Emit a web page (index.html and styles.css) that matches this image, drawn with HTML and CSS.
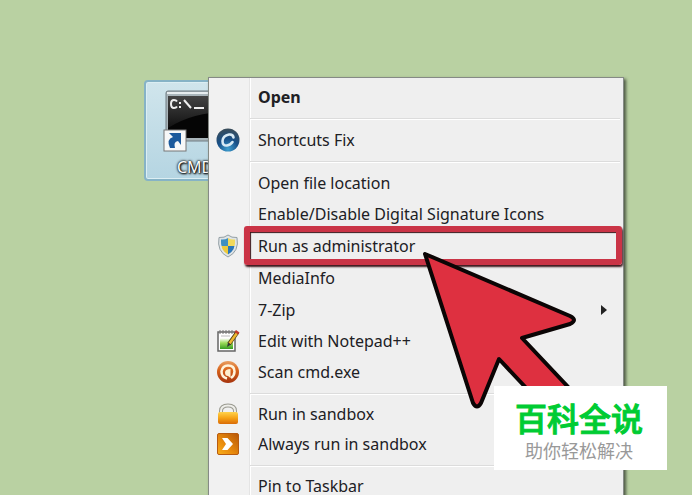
FILE: index.html
```html
<!DOCTYPE html>
<html lang="en">
<head>
<meta charset="utf-8">
<title>Run as administrator</title>
<link rel="stylesheet" href="styles.css">
</head>
<body>
<main class="desktop">
  <a class="shortcut" href="#cmd">
    <svg class="shortcut-icon" width="64" height="66" viewBox="0 0 64 66" aria-hidden="true">
      <defs>
        <linearGradient id="screen" x1="0" y1="0" x2="0" y2="1"><stop offset="0" stop-color="#444"/><stop offset="1" stop-color="#111"/></linearGradient>
      </defs>
      <rect x="3" y="1" width="70" height="50" rx="2" fill="#a9b5ba" stroke="#717c82"/>
      <path d="M4 3H64" stroke="#e7edef" stroke-width="2"/>
      <rect x="5" y="6" width="66" height="42" fill="#050505"/>
      <path d="M5 6H64V22Q30 22 5 38Z" fill="url(#screen)"/>
      <path d="M14 11.500Q13 10 11 10Q8 10 8 14Q8 18 11 18Q13 18 14 16.500M17 12v2M17 16v2M21 10L28 18M31 18H41" fill="none" stroke="#eee" stroke-width="2"/>
      <rect x="1" y="40" width="22" height="21" fill="#f7f8f8" stroke="#777"/>
      <path d="M7 58Q3 49 10 47L6 43H18V55L15 51Q10 52 12 58Z" fill="#1c5a9c"/>
    </svg>
    <span class="shortcut-name">CMD</span>
  </a>

  <div class="menu" role="menu">
    <button class="item default" role="menuitem"><span class="icon"></span>Open</button>
    <hr class="separator">
    <button class="item" role="menuitem"><span class="icon">
      <svg width="24" height="24" viewBox="0 0 24 24"><defs><radialGradient id="orb" cx=".5" cy=".9" r=".9"><stop offset="0" stop-color="#3d9fd0"/><stop offset=".5" stop-color="#174f88"/><stop offset="1" stop-color="#3a4c58"/></radialGradient></defs><circle cx="12" cy="12" r="11.500" fill="url(#orb)"/><path d="M17.500 9.500Q17 6 13 6.500Q7 7.500 6.500 13Q6.500 18 11 17.500Q14.500 17 16.500 14" fill="none" stroke="#d8eaf5" stroke-width="2.600" stroke-linecap="round"/></svg>
    </span>Shortcuts Fix</button>
    <hr class="separator">
    <button class="item" role="menuitem"><span class="icon"></span>Open file location</button>
    <button class="item tall" role="menuitem"><span class="icon"></span>Enable/Disable Digital Signature Icons</button>
    <button class="item tall marked" role="menuitem"><span class="icon">
      <svg width="22" height="24" viewBox="0 0 22 24"><defs><clipPath id="shield"><path d="M11 4Q14 6 18 5.500Q19 16 11 20.500Q3 16 4 5.500Q8 6 11 4Z"/></clipPath></defs><path d="M11 1Q14.500 4 20 3.500Q22.500 17.500 11 23Q-.5 17.500 2 3.500Q7.500 4 11 1Z" fill="#dfe4e6" stroke="#94a0a6"/><g clip-path="url(#shield)"><path fill="#3e8fc2" d="M0 0H11V12H0Z"/><path fill="#f2d95a" d="M11 0H22V12H11Z"/><path fill="#ecc93c" d="M0 12H11V24H0Z"/><path fill="#2b76b8" d="M11 12H22V24H11Z"/></g></svg>
    </span>Run as administrator</button>
    <button class="item tall" role="menuitem"><span class="icon"></span>MediaInfo</button>
    <button class="item" role="menuitem"><span class="icon"></span>7-Zip
      <svg class="submenu" width="6" height="10" viewBox="0 0 6 10"><path d="M0 0L6 5L0 10Z" fill="#222"/></svg>
    </button>
    <button class="item" role="menuitem"><span class="icon">
      <svg width="24" height="24" viewBox="0 0 24 24"><defs><linearGradient id="page" x1="0" y1="0" x2="0" y2="1"><stop offset=".1" stop-color="#fff"/><stop offset=".5" stop-color="#9ada58"/><stop offset="1" stop-color="#359b20"/></linearGradient></defs><path d="M2 3H19V22H2Z" fill="#fff" stroke="#666" stroke-width="1.500"/><path d="M4 8H17V20H4Z" fill="url(#page)"/><path d="M4 1V5M7 1V5M10 1V5M13 1V5M16 1V5" stroke="#777"/><path d="M5 7H14" stroke="#bbb"/><path d="M21.500 3L13 15" stroke="#554018" stroke-width="4"/><path d="M21 4L13.500 14.500" stroke="#edb82e" stroke-width="2.500"/><path d="M20 1L23.500 3.500L22 5.500L18.500 3Z" fill="#c33a2b"/><path d="M12 13.500L15 15.500L11 18Z" fill="#333"/></svg>
    </span>Edit with Notepad++</button>
    <button class="item" role="menuitem"><span class="icon">
      <svg width="24" height="24" viewBox="0 0 24 24"><defs><linearGradient id="scan" x1="0" y1="0" x2="0" y2="1"><stop offset="0" stop-color="#e9a063"/><stop offset=".4" stop-color="#d9651c"/><stop offset="1" stop-color="#a5330d"/></linearGradient></defs><circle cx="12" cy="12" r="11" fill="url(#scan)"/><path d="M11 18.500Q5.500 17 5.500 11.500Q6.500 5.500 12 5.500Q18.500 5.500 18.500 11.500Q18.500 15.500 15 18" fill="none" stroke="#fff4dc" stroke-width="2.500"/><path d="M9 12.500Q9 9 14.500 9V18L12 16Q9 16 9 12.500Z" fill="#fff0cf"/></svg>
    </span>Scan cmd.exe</button>
    <hr class="separator">
    <button class="item short" role="menuitem"><span class="icon">
      <svg width="22" height="24" viewBox="0 0 22 24"><defs><linearGradient id="lock" x1="0" y1="0" x2="0" y2="1"><stop offset="0" stop-color="#ffd34c"/><stop offset=".5" stop-color="#f6a316"/><stop offset="1" stop-color="#d96c08"/></linearGradient></defs><path d="M4 12V9Q4 3.500 11 3.500Q18 3.500 18 9V12" fill="none" stroke="#9a9a90" stroke-width="4"/><path d="M4 12V9Q4 3.500 11 3.500Q18 3.500 18 9V12" fill="none" stroke="#eeeeea" stroke-width="2"/><rect x="1" y="10" width="20" height="12" rx="2" fill="url(#lock)"/></svg>
    </span>Run in sandbox</button>
    <button class="item short" role="menuitem"><span class="icon">
      <svg width="24" height="24" viewBox="0 0 24 24"><defs><linearGradient id="go" x1="1" y1="0" x2="0" y2="1"><stop offset="0" stop-color="#b65608"/><stop offset=".6" stop-color="#e98b0d"/><stop offset="1" stop-color="#f9b01c"/></linearGradient></defs><rect x="1.500" y="1.500" width="21" height="21" rx="1.500" fill="url(#go)" stroke="#b85b10"/><path d="M6 6H11.500L17 12L11.500 18H6L10 12Z" fill="#fff"/></svg>
    </span>Always run in sandbox</button>
    <hr class="separator">
    <button class="item short" role="menuitem"><span class="icon"></span>Pin to Taskbar</button>
  </div>

  <svg class="pointer" width="170" height="170" viewBox="0 0 170 170" aria-hidden="true">
    <path d="M10 9L155 71Q163 75 155 79L107 93L170 160L130 163L84 114L66 158Q62 165 58 158Z" fill="#de3040" stroke="#0b0505" stroke-width="4" stroke-linejoin="round"/>
  </svg>

  <aside class="brand" lang="zh">
    <strong class="brand-name">百科全说</strong>
    <span class="brand-line">助你轻松解决</span>
  </aside>
</main>
</body>
</html>
```
FILE: styles.css
```css
* {
  box-sizing: border-box;
}

body {
  margin: 0;
  font-family: "Noto Sans", "Open Sans", "Noto Sans CJK SC", sans-serif;
  font-size: 16px;
  color: #202024;
}

.desktop {
  position: relative;
  height: 100vh;
  overflow: hidden;
  padding: 77px 68px 0 208px;
  background: #b9d1a2;
}

.shortcut {
  position: absolute;
  left: 144px;
  top: 80px;
  width: 104px;
  padding: 8px 0 0 17px;
  border: 2px solid #86b3c6;
  border-radius: 4px;
  background: linear-gradient(#d0e5ec, #b5d5e2);
  box-shadow: inset 0 0 0 1px #dceef3;
  color: #fff;
  text-decoration: none;
}

.shortcut-icon {
  display: block;
}

.shortcut-name {
  display: block;
  padding-left: 14px;
  line-height: 23px;
  text-shadow: 0 0 2px #000, 1px 1px 2px #000, 0 0 3px #222;
}

.menu {
  position: relative;
  padding: 3px;
  border: 1px solid #858a85;
  background: linear-gradient(90deg, #f1f1f1 40px, #e4e4e4 40px, #e4e4e4 41px, #fff 41px, #fff 42px, #efefef 42px);
  box-shadow: 2px 2px 3px #4b5542;
}

.item {
  position: relative;
  display: flex;
  align-items: center;
  width: 100%;
  height: 31px;
  padding: 0 13px 0 4px;
  border: 0;
  background: none;
  color: inherit;
  font: inherit;
  text-align: left;
}

.default {
  font-weight: 700;
}

.tall {
  height: 32px;
}

.short {
  height: 30px;
}

.icon {
  display: flex;
  justify-content: center;
  width: 24px;
  margin-right: 18px;
}

.submenu {
  margin-left: auto;
}

.separator {
  height: 2px;
  margin: 6px 0 4px 38px;
  border: 0;
  border-top: 1px solid #dcdcdc;
  border-bottom: 1px solid #fff;
}

.marked::after {
  content: "";
  position: absolute;
  inset: -4px -2px -3px 32px;
  border: 6px solid #ca3446;
  border-radius: 3px;
  box-shadow: 1px 2px 2px #3a1519, inset 1px 1px 1px #3a1519;
}

.pointer {
  position: absolute;
  left: 415px;
  top: 245px;
}

.brand {
  position: absolute;
  right: 25px;
  bottom: 25px;
  display: flex;
  flex-direction: column;
  align-items: center;
  padding: 10px 24px 8px 21px;
  background: #fff;
  font-family: "Noto Sans CJK SC", sans-serif;
}

.brand-name {
  font-size: 32px;
  font-weight: 500;
  line-height: 42px;
  color: #0c3;
  -webkit-text-stroke: 1px #0c3;
}

.brand-line {
  font-size: 18px;
  line-height: 24px;
  color: #999;
}
```
